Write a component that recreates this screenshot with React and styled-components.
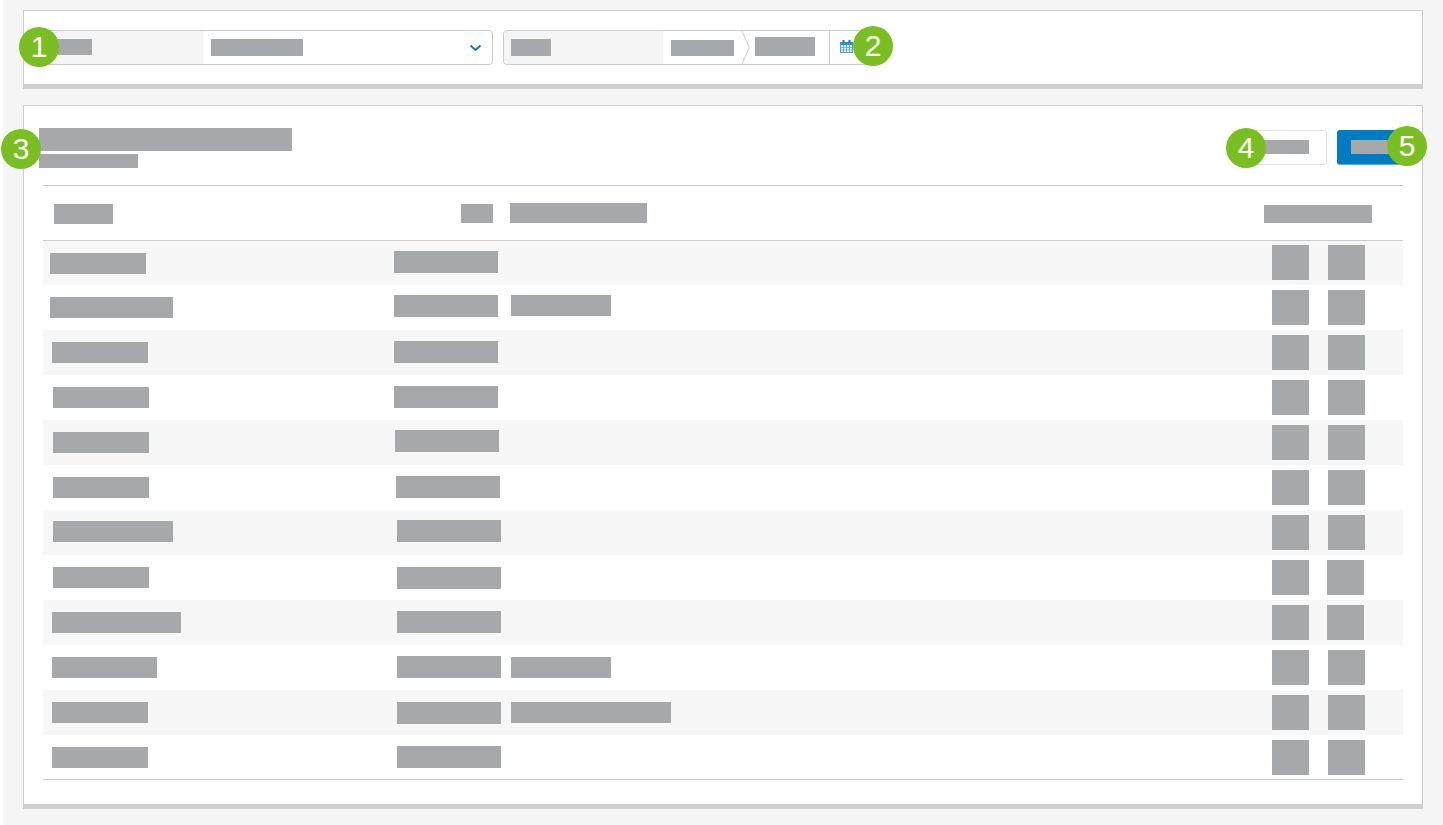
import React from "react";
import styled, { createGlobalStyle } from "styled-components";

const GlobalStyle = createGlobalStyle`
  html, body { margin: 0; padding: 0; background: #fff; overflow: hidden; }
  body { font-family: "Liberation Sans", Arial, sans-serif; }
  * { box-sizing: border-box; }
`;

const Page = styled.div`
  margin-left: 3px;
  width: 1440px;
  height: 825px;
  padding: 10px 20px 16px;
  display: flex;
  flex-direction: column;
  gap: 16px;
  background: #f5f5f5;
`;

const Card = styled.section`
  width: 1400px;
  background: #fff;
  border: 1px solid #ccc;
  border-bottom: 5px solid #cfcfcf;
`;

const FilterBar = styled(Card)`
  display: flex;
  gap: 10px;
  padding: 19px;
`;

const Redacted = styled.div`
  flex: none;
  width: ${(p) => p.$w}px;
  height: ${(p) => p.$h}px;
  margin-left: ${(p) => p.$ml || 0}px;
  margin-top: ${(p) => p.$mt || 0}px;
  background: #a7a8aa;
`;

const Field = styled.div`
  position: relative;
  display: flex;
  align-items: stretch;
  width: ${(p) => p.$w}px;
  height: 35px;
  border: 1px solid #ccc;
  border-radius: 4px;
  background: #fff;
`;

const FieldLabel = styled.div`
  display: flex;
  align-items: flex-start;
  width: 159px;
  background: #f5f5f5;
  border-radius: 3px 0 0 3px;
`;

const Chevron = styled.svg`
  flex: none;
  width: 13px;
  height: 8px;
  margin: 13px 10px 0 auto;
`;

const StepArrow = styled.svg`
  flex: none;
  width: 9px;
  height: 35px;
  margin: -1px 0 -1px 7px;
`;

const FieldDivider = styled.div`
  flex: none;
  width: 1px;
  margin-left: 14px;
  background: #ccc;
`;

const CalendarIcon = styled.svg`
  flex: none;
  width: 13px;
  height: 13px;
  margin: 9px 0 0 10px;
`;

const Badge = styled.span`
  position: absolute;
  z-index: 2;
  left: ${(p) => p.$left}px;
  top: ${(p) => p.$top}px;
  width: 40px;
  height: 40px;
  border-radius: 50%;
  background: #7abf21;
  color: #fff;
  font: 400 30px/40px "Liberation Sans", Arial, sans-serif;
  text-align: center;
`;

const ListCard = styled(Card)`
  padding: 0 19px 24px;
`;

const TopBar = styled.header`
  display: flex;
  justify-content: space-between;
  align-items: flex-start;
  height: 79px;
`;

const TitleGroup = styled.div`
  position: relative;
  display: flex;
  flex-direction: column;
  gap: 3px;
  margin: 22px 0 0 -4px;
`;

const ButtonGroup = styled.div`
  display: flex;
  gap: 10px;
  padding-top: 24px;
`;

const Button = styled.button`
  position: relative;
  display: flex;
  align-items: flex-start;
  width: ${(p) => p.$w}px;
  height: 35px;
  padding: 0;
  border: 1px solid ${(p) => (p.$primary ? "#007cc3" : "#e3e3e3")};
  border-bottom-color: ${(p) => (p.$primary ? "#5fa9d9" : "#e3e3e3")};
  border-radius: 3px;
  background: ${(p) => (p.$primary ? "#007cc3" : "#fff")};
`;

const Table = styled.div`
  display: flex;
  flex-direction: column;
  border-top: 1px solid #ccc;
  border-bottom: 1px solid #ccc;
`;

const columns = "350px 112px 1fr 139px";

const TableHead = styled.div`
  display: grid;
  grid-template-columns: ${columns};
  align-items: start;
  height: 55px;
  border-bottom: 1px solid #ccc;
`;

const Row = styled.div`
  display: grid;
  grid-template-columns: ${columns};
  align-items: start;
  height: 45px;
  background: #fff;
  &:nth-child(odd) { background: #f7f7f7; }
  &:first-child, &:last-child { height: 44px; }
`;

const Cell = styled.div`
  display: flex;
  align-items: flex-start;
`;

const rows = [
  { name: [7, 12, 96], date: [1, 10], act: 4 },
  { name: [7, 12, 123], date: [1, 10], desc: [10, 100], act: 5 },
  { name: [9, 12, 96], date: [1, 11], act: 5 },
  { name: [10, 12, 96], date: [1, 11], act: 5 },
  { name: [10, 12, 96], date: [2, 10], act: 5 },
  { name: [10, 12, 96], date: [3, 11], act: 5 },
  { name: [10, 11, 120], date: [4, 10], act: 5 },
  { name: [10, 12, 96], date: [4, 12], act: 5, gap: 18 },
  { name: [9, 12, 129], date: [4, 11], act: 5, gap: 18 },
  { name: [9, 12, 105], date: [4, 11], desc: [12, 100], act: 5 },
  { name: [9, 12, 96], date: [4, 12], desc: [12, 160], act: 5 },
  { name: [9, 12, 96], date: [4, 11], act: 5 },
];

const calendarColumns = [3, 6, 9];
const calendarRows = [7.5, 10];

export default function App() {
  return (
    <>
      <GlobalStyle />
      <Page>
        <FilterBar as="div">
          <Field $w={450}>
            <Badge $left={-25} $top={-4}>1</Badge>
            <FieldLabel>
              <Redacted $w={40} $h={16} $ml={8} $mt={8} />
            </FieldLabel>
            <Redacted $w={92} $h={17} $ml={8} $mt={8} />
            <Chevron viewBox="0 0 13 8" aria-hidden="true">
              <path d="M1.5 1.5 L6.5 6 L11.5 1.5" fill="none" stroke="#0b7cc2" strokeWidth="2" />
            </Chevron>
          </Field>
          <Field $w={370}>
            <FieldLabel>
              <Redacted $w={40} $h={17} $ml={7} $mt={8} />
            </FieldLabel>
            <Redacted $w={63} $h={16} $ml={8} $mt={9} />
            <StepArrow viewBox="0 0 9 35" aria-hidden="true">
              <path d="M0.5 0 L8.3 17.5 L0.5 35" fill="none" stroke="#ccc" strokeWidth="1" />
            </StepArrow>
            <Redacted $w={60} $h={19} $ml={5} $mt={6} />
            <FieldDivider />
            <CalendarIcon viewBox="0 0 13 13" aria-hidden="true">
              <rect x="0.5" y="2.5" width="12" height="10" fill="#eaf4fb" stroke="#4a9fd8" strokeWidth="1" />
              <rect x="0.5" y="2" width="12" height="3" fill="#2f8fcf" />
              <rect x="2.5" y="0" width="2" height="3" fill="#0b7cc2" />
              <rect x="8.5" y="0" width="2" height="3" fill="#0b7cc2" />
              {calendarColumns.map((x) => (
                <path key={x} d={`M${x + 0.5} 5 V12`} stroke="#6db3e2" strokeWidth="1" />
              ))}
              {calendarRows.map((y) => (
                <path key={y} d={`M0.5 ${y} H12.5`} stroke="#6db3e2" strokeWidth="1" />
              ))}
            </CalendarIcon>
            <Badge $left={349} $top={-5}>2</Badge>
          </Field>
        </FilterBar>

        <ListCard as="div">
          <TopBar>
            <TitleGroup>
              <Badge $left={-38} $top={1}>3</Badge>
              <Redacted $w={253} $h={23} />
              <Redacted $w={99} $h={14} />
            </TitleGroup>
            <ButtonGroup>
              <Button $w={81}>
                <Badge $left={-21} $top={-3}>4</Badge>
                <Redacted $w={47} $h={14} $ml={15} $mt={9} />
              </Button>
              <Button $w={66} $primary>
                <Redacted $w={40} $h={14} $ml={13} $mt={9} />
                <Badge $left={49} $top={-5}>5</Badge>
              </Button>
            </ButtonGroup>
          </TopBar>

          <Table>
            <TableHead>
              <Cell><Redacted $w={59} $h={20} $ml={11} $mt={18} /></Cell>
              <Cell><Redacted $w={32} $h={19} $ml={68} $mt={18} /></Cell>
              <Cell><Redacted $w={137} $h={20} $ml={5} $mt={17} /></Cell>
              <Cell><Redacted $w={108} $h={18} $mt={19} /></Cell>
            </TableHead>
            <div>
              {rows.map((r, i) => (
                <Row key={i}>
                  <Cell><Redacted $w={r.name[2]} $h={21} $ml={r.name[0]} $mt={r.name[1]} /></Cell>
                  <Cell><Redacted $w={104} $h={22} $ml={r.date[0]} $mt={r.date[1]} /></Cell>
                  <Cell>{r.desc && <Redacted $w={r.desc[1]} $h={21} $ml={6} $mt={r.desc[0]} />}</Cell>
                  <Cell>
                    <Redacted $w={37} $h={35} $ml={8} $mt={r.act} />
                    <Redacted $w={37} $h={35} $ml={r.gap || 19} $mt={r.act} />
                  </Cell>
                </Row>
              ))}
            </div>
          </Table>
        </ListCard>
      </Page>
    </>
  );
}
